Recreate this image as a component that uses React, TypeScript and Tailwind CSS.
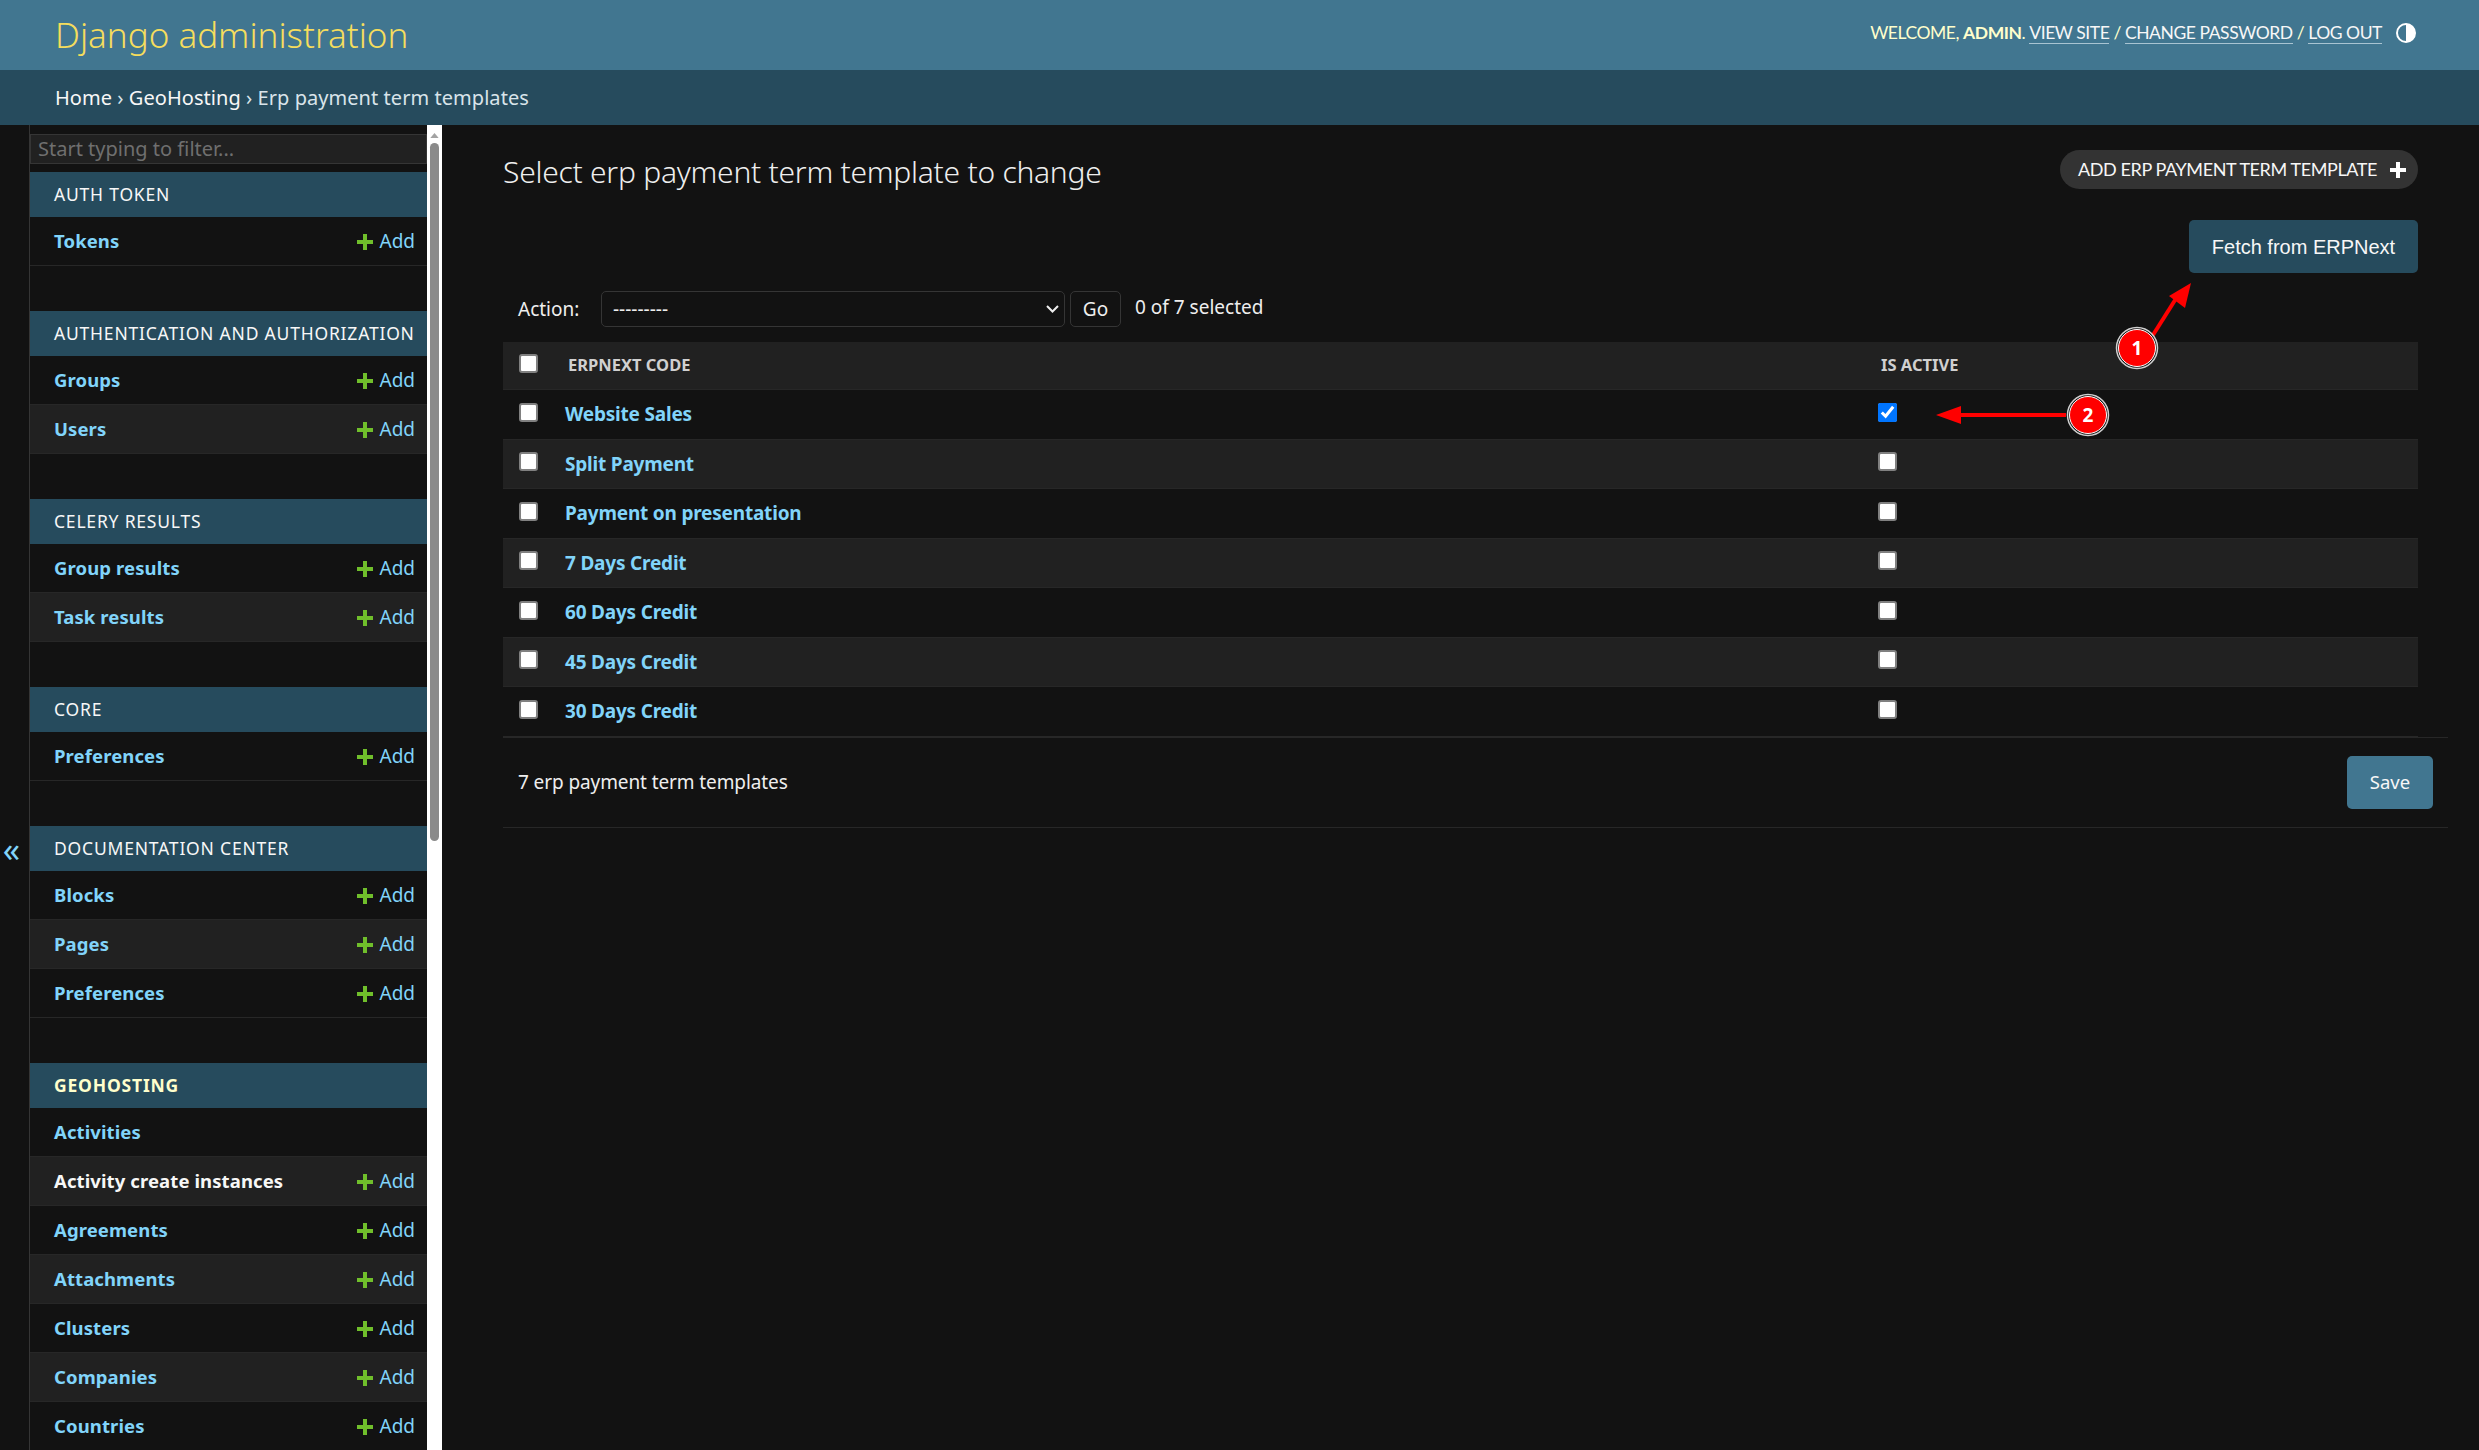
import React from 'react';

type Section = { title: string; current?: boolean; rows: { name: string; add?: boolean; active?: boolean }[] };

const sections: Section[] = [
  { title: 'Auth Token', rows: [{ name: 'Tokens', add: true }] },
  { title: 'Authentication and Authorization', rows: [{ name: 'Groups', add: true }, { name: 'Users', add: true }] },
  { title: 'Celery Results', rows: [{ name: 'Group results', add: true }, { name: 'Task results', add: true }] },
  { title: 'Core', rows: [{ name: 'Preferences', add: true }] },
  { title: 'Documentation Center', rows: [{ name: 'Blocks', add: true }, { name: 'Pages', add: true }, { name: 'Preferences', add: true }] },
  {
    title: 'GeoHosting',
    current: true,
    rows: [
      { name: 'Activities' },
      { name: 'Activity create instances', add: true, active: true },
      { name: 'Agreements', add: true },
      { name: 'Attachments', add: true },
      { name: 'Clusters', add: true },
      { name: 'Companies', add: true },
      { name: 'Countries', add: true },
    ],
  },
];

const templates = ['Website Sales', 'Split Payment', 'Payment on presentation', '7 Days Credit', '60 Days Credit', '45 Days Credit', '30 Days Credit'];

const checkbox = 'h-[19px] w-[19px] appearance-none rounded-[3px] border-2 border-[#808080] bg-white';

const PlusIcon = ({ className }: { className: string }) => (
  <svg viewBox="0 0 16 16" className={className} fill="currentColor">
    <path d="M6 0h4v6h6v4h-6v6H6v-6H0V6h6z" />
  </svg>
);

const Sidebar = () => (
  <div className="flex h-full w-[442px] shrink-0">
    <div className="flex w-[30px] shrink-0 items-center justify-center border-r border-[#353535]">
      <span className="mr-[6px] mt-[122px] text-[34px] leading-none text-[#81d4fa]">«</span>
    </div>
    <div className="w-[397px] shrink-0 overflow-hidden pt-[9px]">
      <input
        placeholder="Start typing to filter..."
        className="mb-[8px] block h-[30px] w-full border border-[#353535] bg-[#212121] px-[7px] text-[20px] text-[#eeeeee] outline-none placeholder:text-[#6f6f6f]"
      />
      {sections.map((section) => (
        <div key={section.title} className="mb-[45px]">
          <div className={`flex h-[45px] items-center bg-[#264b5d] pl-[24px] text-[17.5px] uppercase tracking-[0.8px] ${section.current ? 'font-bold text-[#ffffcc]' : 'text-[#f7f7f7]'}`}>
            {section.title}
          </div>
          {section.rows.map((row, i) => (
            <div key={row.name} className={`flex h-[49px] items-center justify-between border-b border-[#272727] pl-[24px] pr-[12px] text-[18.5px] ${i % 2 ? 'bg-[#212121]' : ''}`}>
              <span className={`font-bold tracking-[0.1px] ${row.active ? 'text-[#f7f7f7]' : 'text-[#81d4fa]'}`}>{row.name}</span>
              {row.add && (
                <span className="flex items-center text-[19px] text-[#81d4fa]">
                  <PlusIcon className="mr-[6px] mt-[2px] h-[16px] w-[16px] text-[#70bf2b]" />
                  Add
                </span>
              )}
            </div>
          ))}
        </div>
      ))}
    </div>
    <div className="flex w-[15px] shrink-0 flex-col items-center bg-white pt-[8px]">
      <svg viewBox="0 0 10 6" className="h-[5px] w-[9px] text-[#a3a3a3]" fill="currentColor">
        <path d="M5 0l5 6H0z" />
      </svg>
      <div className="mt-[5px] h-[698px] w-[9px] rounded-full bg-[#8a8a8a]" />
    </div>
  </div>
);

const Annotations = () => (
  <svg className="pointer-events-none absolute left-0 top-0 h-[1450px] w-[2479px]" viewBox="0 0 2479 1450">
    <path d="M2153 335L2177 297" stroke="#ff0000" strokeWidth="4" />
    <path d="M2191 283L2169 296L2185 308z" fill="#ff0000" />
    <path d="M2066 415H1955" stroke="#ff0000" strokeWidth="4" />
    <path d="M1936 415L1961 406V424z" fill="#ff0000" />
    {[
      { n: '1', x: 2137, y: 348 },
      { n: '2', x: 2088, y: 415 },
    ].map((c) => (
      <g key={c.n}>
        <circle cx={c.x} cy={c.y} r="20.5" fill="#111111" stroke="#d0d0d0" strokeWidth="1.5" />
        <circle cx={c.x} cy={c.y} r="18.5" fill="#ff0000" stroke="#ffffff" strokeWidth="1" />
        <text x={c.x} y={c.y + 7} textAnchor="middle" fontSize="19" fontWeight="700" fill="#ffffff" fontFamily="'Noto Sans', sans-serif">
          {c.n}
        </text>
      </g>
    ))}
  </svg>
);

const App: React.FC = () => (
  <div className="relative flex h-[1450px] w-[2479px] flex-col overflow-hidden bg-[#121212] font-['Noto_Sans',sans-serif] text-[#eeeeee]">
    <header className="flex h-[70px] shrink-0 items-center justify-between bg-[#417690] pl-[55px] pr-[63px]">
      <div className="text-[35px] font-light text-[#f5dd5d]">Django administration</div>
      <div className="flex items-center pb-[4px] font-['Lato',sans-serif] text-[17.5px] uppercase tracking-[-0.44px] text-[#ffffcc]">
        <span>Welcome,&nbsp;</span>
        <span className="font-bold">Admin</span>
        <span>.&nbsp;</span>
        <a className="border-b border-[#a9c4d2] leading-[21px] text-[#f7f7f7]">View site</a>
        <span>&nbsp;/&nbsp;</span>
        <a className="border-b border-[#a9c4d2] leading-[21px] text-[#f7f7f7]">Change password</a>
        <span>&nbsp;/&nbsp;</span>
        <a className="border-b border-[#a9c4d2] leading-[21px] text-[#f7f7f7]">Log out</a>
        <svg viewBox="0 0 20 20" className="ml-[14px] h-[20px] w-[20px]">
          <circle cx="10" cy="10" r="9" fill="none" stroke="#ffffff" strokeWidth="2" />
          <path d="M10 1a9 9 0 0 1 0 18z" fill="#ffffff" />
        </svg>
      </div>
    </header>
    <div className="flex h-[55px] shrink-0 items-center bg-[#264b5d] pl-[55px] text-[20px] tracking-[0.05px] text-[#d9e4ea]">
      <span className="text-[#f7f7f7]">Home</span>
      <span>&nbsp;›&nbsp;</span>
      <span className="text-[#f7f7f7]">GeoHosting</span>
      <span>&nbsp;›&nbsp;Erp payment term templates</span>
    </div>
    <div className="flex min-h-0 flex-1">
      <Sidebar />
      <main className="min-w-0 flex-1 pl-[61px] pr-[31px]">
        <div className="flex h-[95px] items-start justify-between pr-[30px] pt-[24px]">
          <h1 className="text-[30px] font-light leading-[46px] tracking-[-0.25px] text-[#eeeeee]">Select erp payment term template to change</h1>
          <a className="mt-[1px] flex h-[39px] items-center rounded-full bg-[#333333] pl-[18px] pr-[12px] font-['Lato',sans-serif] text-[18px] uppercase tracking-[-0.4px] text-[#f7f7f7]">
            Add erp payment term template
            <PlusIcon className="ml-[13px] h-[16px] w-[16px] text-white" />
          </a>
        </div>
        <div className="flex justify-end pr-[30px]">
          <button className="h-[53px] w-[229px] rounded-[5px] bg-[#264b5d] font-['Liberation_Sans',sans-serif] text-[20px] text-[#f7f7f7]">Fetch from ERPNext</button>
        </div>
        <div className="flex h-[69px] items-center pl-[15px] pt-[3px]">
          <span className="w-[83px] text-[19px]">Action:</span>
          <div className="relative h-[36px] w-[464px]">
            <select className="h-full w-full appearance-none rounded-[5px] border border-[#353535] bg-[#121212] pl-[11px] text-[19px] text-[#eeeeee] [color-scheme:dark]">
              <option>---------</option>
            </select>
            <svg viewBox="0 0 13 8" className="pointer-events-none absolute right-[6px] top-[14px] h-[8px] w-[13px]" fill="none" stroke="#eeeeee" strokeWidth="2">
              <path d="M1 1l5.5 5.5L12 1" />
            </svg>
          </div>
          <button className="ml-[5px] h-[36px] w-[51px] rounded-[5px] border border-[#353535] text-[19px]">Go</button>
          <span className="mb-[3px] ml-[14px] text-[19px]">0 of 7 selected</span>
        </div>
        <div className="w-[1915px]">
          <div className="grid h-[48px] grid-cols-[62px_1313px_1fr] items-center border-b border-[#272727] bg-[#212121] text-[16.5px] font-bold uppercase text-[#d0d0d0]">
            <input type="checkbox" className={`${checkbox} mb-[4px] ml-[16px]`} />
            <span className="pl-[3px]">Erpnext code</span>
            <span className="pl-[3px]">Is active</span>
          </div>
          {templates.map((name, i) => (
            <div key={name} className={`grid h-[49.5px] grid-cols-[62px_1313px_1fr] items-center border-b border-[#272727] ${i % 2 ? 'bg-[#212121]' : ''}`}>
              <input type="checkbox" className={`${checkbox} mb-[4px] ml-[16px]`} />
              <a className="text-[19px] font-bold tracking-[-0.2px] text-[#81d4fa]">{name}</a>
              {i === 0 ? (
                <input type="checkbox" defaultChecked className="mb-[4px] h-[19px] w-[19px]" />
              ) : (
                <input type="checkbox" className={`${checkbox} mb-[4px]`} />
              )}
            </div>
          ))}
        </div>
        <div className="flex h-[91px] items-center justify-between border-y border-[#272727] pl-[15px] pr-[15px]">
          <span className="text-[19px] tracking-[-0.1px]">7 erp payment term templates</span>
          <button className="h-[53px] w-[86px] rounded-[5px] bg-[#417690] text-[18.5px] text-[#f7f7f7]">Save</button>
        </div>
      </main>
    </div>
    <Annotations />
  </div>
);

export default App;
